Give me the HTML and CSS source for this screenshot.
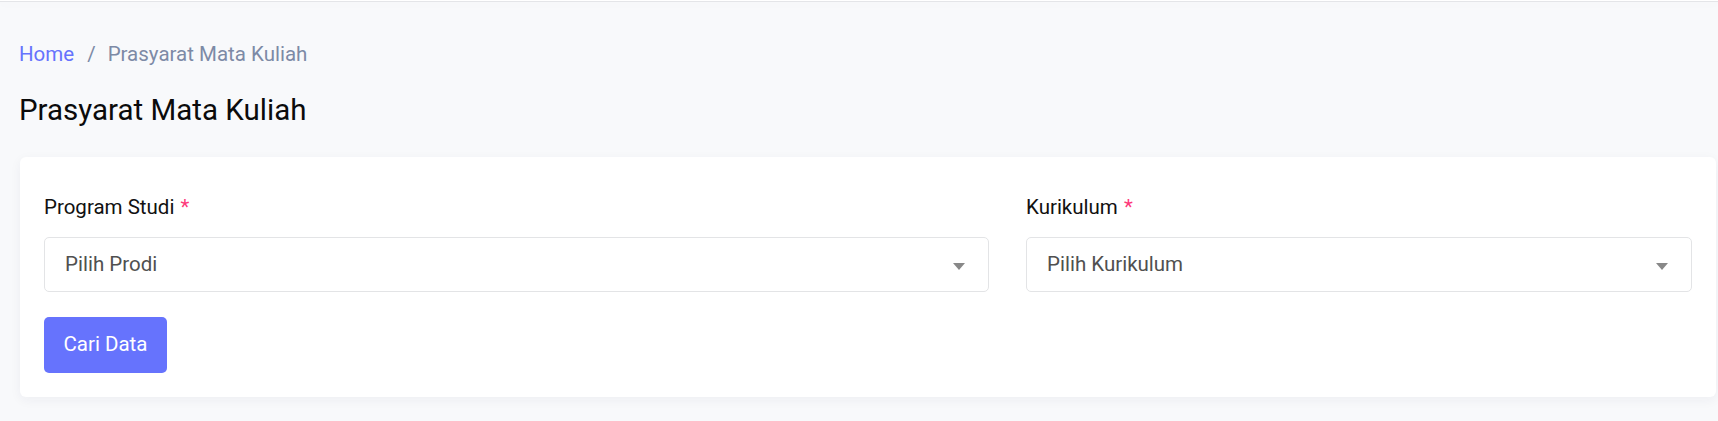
FILE: index.html
```html
<!DOCTYPE html>
<html lang="id">
<head>
<meta charset="utf-8">
<title>Prasyarat Mata Kuliah</title>
<link rel="stylesheet" href="styles.css">
</head>
<body>
<div class="topbar"></div>
<main class="content">
  <nav class="breadcrumb">
    <a class="crumb-link" href="#">Home</a>
    <span class="crumb-sep">/</span>
    <span class="crumb-current">Prasyarat Mata Kuliah</span>
  </nav>
  <h1 class="page-title">Prasyarat Mata Kuliah</h1>
  <section class="card">
    <div class="form-row">
      <div class="field">
        <label class="field-label">Program Studi <span class="req">*</span></label>
        <div class="select">
          <span class="select-text">Pilih Prodi</span>
          <span class="select-arrow"></span>
        </div>
      </div>
      <div class="field">
        <label class="field-label">Kurikulum <span class="req">*</span></label>
        <div class="select">
          <span class="select-text">Pilih Kurikulum</span>
          <span class="select-arrow"></span>
        </div>
      </div>
    </div>
    <button class="btn-primary" type="button">Cari Data</button>
  </section>
</main>
</body>
</html>
```
FILE: styles.css
```css
* { box-sizing: border-box; }
html, body { margin: 0; padding: 0; }
body {
  background: #f8f9fb;
  font-family: Roboto, "Liberation Sans", sans-serif;
  color: #111;
  width: 1718px;
  height: 421px;
  overflow: hidden;
}
.topbar {
  height: 2px;
  background: #fff;
  border-bottom: 1px solid #e4e5e8;
  box-shadow: 0 2px 8px rgba(20, 30, 60, 0.04);
}
.content {
  padding: 37px 2px 0 20px;
}
.breadcrumb {
  display: flex;
  align-items: center;
  font-size: 20.5px;
  line-height: 30px;
  margin-left: -1px;
}
.crumb-link {
  color: #6673fd;
  text-decoration: none;
}
.crumb-sep {
  color: #7d8aa6;
  margin: 0 12px 0 13px;
}
.crumb-current {
  color: #7d8aa6;
}
.page-title {
  margin: 23px 0 0 -1px;
  font-size: 29.5px;
  line-height: 36px;
  font-weight: 400;
  color: #0b0b0b;
}
.card {
  margin-top: 29px;
  background: #fff;
  border-radius: 6px;
  box-shadow: 0 3px 12px rgba(30, 40, 80, 0.05);
  padding: 35px 24px 24px 24px;
}
.form-row {
  display: grid;
  grid-template-columns: 945fr 666fr;
  column-gap: 37px;
}
.field-label {
  display: block;
  font-size: 20.5px;
  line-height: 30px;
  color: #111;
}
.req {
  color: #fd397a;
  margin-left: 1px;
}
.select {
  margin-top: 15px;
  height: 55px;
  border: 1px solid #e3e4e6;
  border-radius: 5px;
  display: flex;
  align-items: center;
  justify-content: space-between;
  padding: 0 23px 2px 20px;
}
.select-text {
  font-size: 20.5px;
  color: #505050;
}
.select-arrow {
  width: 0;
  height: 0;
  border-left: 6px solid transparent;
  border-right: 6px solid transparent;
  border-top: 7px solid #888;
  margin-top: 6px;
}
.btn-primary {
  margin-top: 25px;
  height: 56px;
  width: 123px;
  border: none;
  border-radius: 5px;
  background: #6673fd;
  color: #fff;
  font-family: Roboto, "Liberation Sans", sans-serif;
  font-size: 20.5px;
  padding: 0 0 2px 0;
  cursor: pointer;
}
```
